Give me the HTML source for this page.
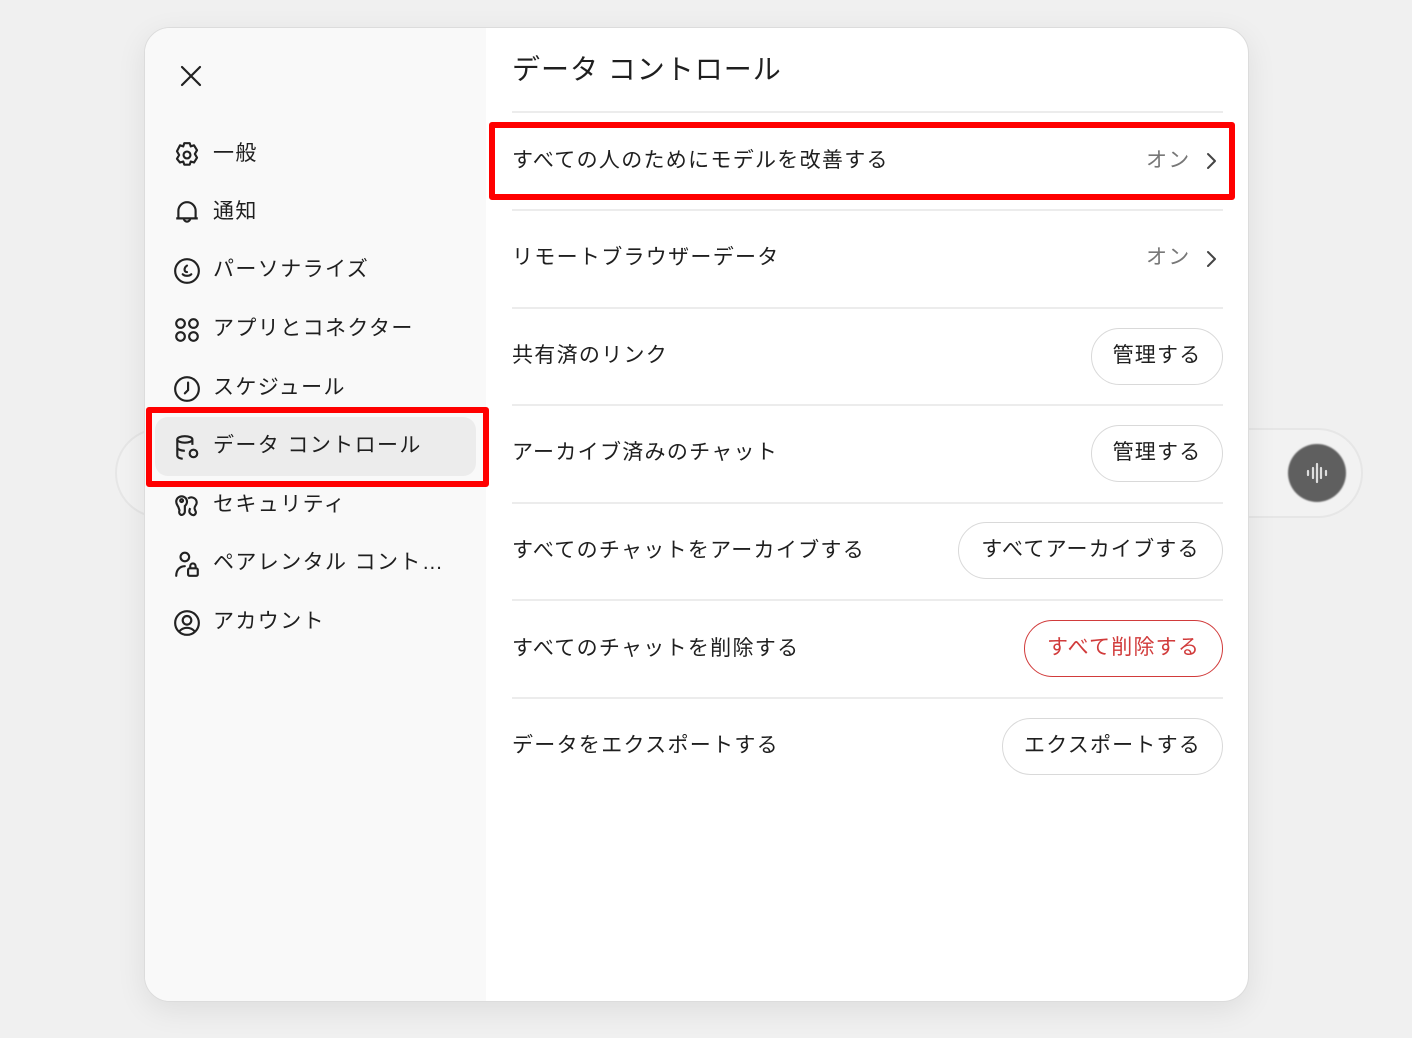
<!DOCTYPE html>
<html><head><meta charset="utf-8"><style>
*{margin:0;padding:0;box-sizing:border-box}
body{width:1412px;height:1038px;background:#f0f0f0;font-family:"Liberation Sans","Noto Sans CJK JP",sans-serif;color:#1f1f1f;position:relative;overflow:hidden}
.abs{position:absolute}
.pill{position:absolute;left:115px;top:428px;width:1248px;height:90px;border-radius:45px;border:2px solid #e6e6e6;background:#f2f2f2}
.mic{position:absolute;left:1288px;top:444px;width:58px;height:58px;border-radius:50%;background:#5f5f5f;filter:blur(0.8px)}
.modal{position:absolute;left:144px;top:27px;width:1105px;height:975px;border-radius:26px;background:#fff;overflow:hidden;box-shadow:0 8px 30px rgba(0,0,0,.08);border:1px solid #dcdcdc}
.side{position:absolute;left:0;top:0;width:341px;height:100%;background:#f9f9f9}
.item{position:absolute;left:0;width:341px;height:40px;font-size:21px;line-height:40px;letter-spacing:1.4px}
.item svg{position:absolute;left:28px;top:7px}
.item span{position:absolute;left:68px;top:0;white-space:nowrap}
.sel{position:absolute;left:10px;top:389px;width:321px;height:59px;border-radius:13px;background:#ececec}
.title{position:absolute;left:367px;top:22px;font-size:28px;line-height:40px;letter-spacing:1px}
.hr{position:absolute;left:367px;width:711px;height:2px;background:#ececec}
.row{position:absolute;left:367px;font-size:21px;line-height:30px;white-space:nowrap;letter-spacing:1.3px}
.on{position:absolute;left:1001px;font-size:21px;color:#777;line-height:30px;letter-spacing:1.3px}
.btn{position:absolute;height:57px;border:1.5px solid #d9d9d9;border-radius:29px;font-size:21px;line-height:54px;text-align:center;white-space:nowrap;background:#fff;letter-spacing:1.2px}
.red{border-color:#d13b3b;color:#d13b3b}
.rb{position:absolute;border:6px solid #ff0000;border-radius:3px}
</style></head><body>
<div class="pill"></div>
<div class="mic"></div>
<svg class="abs" style="left:1303px;top:461px" width="28" height="24" viewBox="0 0 28 24"><path d="M5 10v4M10 7v10M14 3v18M18 7v10M23 10v4" stroke="#ddd" stroke-width="2.2" stroke-linecap="round"/></svg>
<div class="modal">
 <div class="side">
  <svg class="abs" style="left:35px;top:37px" width="22" height="22" viewBox="0 0 22 22"><path d="M2 2L20 20M20 2L2 20" stroke="#222" stroke-width="2.2" stroke-linecap="round"/></svg>
  <div class="sel"></div>
  <div class="item" style="top:106px"><svg width="28" height="28" viewBox="0 0 26 26" fill="none" stroke="#222" stroke-width="2"><path d="M10.5 2h5l1 3 3-1 2.8 4.5-2 3.5 2 3.5-2.8 4.5-3-1-1 3h-5l-1-3-3 1L3.7 16.5l2-3.5-2-3.5L6.5 4l3 1z" stroke-linejoin="round"/><circle cx="13" cy="13" r="3.2"/></svg><span>一般</span></div>
  <div class="item" style="top:164px"><svg width="28" height="28" viewBox="0 0 26 26" fill="none" stroke="#222" stroke-width="2"><path d="M5 18V11a8 8 0 0116 0v7zM3 18h20M10 18a3 3 0 006 0" stroke-linejoin="round"/></svg><span>通知</span></div>
  <div class="item" style="top:222px"><svg width="28" height="28" viewBox="0 0 26 26" fill="none" stroke="#222" stroke-width="2"><circle cx="13" cy="13" r="11"/><path d="M13 8c-3 2-3 6 0 6M9 16c2 2 6 2 8 0" stroke-linecap="round"/></svg><span>パーソナライズ</span></div>
  <div class="item" style="top:281px"><svg width="28" height="28" viewBox="0 0 26 26" fill="none" stroke="#222" stroke-width="2"><circle cx="7" cy="7" r="4"/><circle cx="19" cy="7" r="4"/><circle cx="7" cy="19" r="4"/><circle cx="19" cy="19" r="4"/></svg><span>アプリとコネクター</span></div>
  <div class="item" style="top:340px"><svg width="28" height="28" viewBox="0 0 26 26" fill="none" stroke="#222" stroke-width="2"><circle cx="13" cy="13" r="11"/><path d="M14 7v7l-3 3" stroke-linecap="round"/></svg><span>スケジュール</span></div>
  <div class="item" style="top:398px"><svg width="28" height="28" viewBox="0 0 26 26" fill="none" stroke="#222" stroke-width="2"><ellipse cx="11" cy="6" rx="7" ry="3"/><path d="M4 6v15c0 1.5 2 2.5 5 3M18 6v5M4 13.5c0 1.5 3 3 7 3"/><circle cx="19" cy="19" r="3.5"/></svg><span>データ コントロール</span></div>
  <div class="item" style="top:457px"><svg width="28" height="28" viewBox="0 0 26 26" fill="none" stroke="#222" stroke-width="2"><path d="M3 9a5 5 0 0110 0c0 2-1 3-2 4v5c0 2-2 4-4 3s-1-4-1-4l-1-3C4 12 3 11 3 9zM14 6a5 5 0 018 4c0 2-2 3-2 5s2 3 1 5-3 2-5 0c-1-1-1-3 0-5"/><circle cx="8" cy="8" r="1.3"/></svg><span>セキュリティ</span></div>
  <div class="item" style="top:515px"><svg width="28" height="28" viewBox="0 0 26 26" fill="none" stroke="#222" stroke-width="2"><circle cx="11" cy="6.5" r="4"/><path d="M3 24c0-5 3-9 8-9" stroke-linecap="round"/><rect x="14" y="17" width="9" height="7" rx="1.5"/><path d="M16 17v-2a2.5 2.5 0 015 0v2"/></svg><span>ペアレンタル コント…</span></div>
  <div class="item" style="top:574px"><svg width="28" height="28" viewBox="0 0 26 26" fill="none" stroke="#222" stroke-width="2"><circle cx="13" cy="13" r="11"/><circle cx="13" cy="10.5" r="4"/><path d="M6 20.5c4-4 10-4 14 0"/></svg><span>アカウント</span></div>
 </div>
 <div class="title">データ コントロール</div>
 <div class="hr" style="top:83px"></div>
 <div class="row" style="top:118px">すべての人のためにモデルを改善する</div>
 <div class="on" style="top:118px">オン</div>
 <svg class="abs" style="left:1060px;top:124px" width="12" height="18" viewBox="0 0 12 18"><path d="M3 2l7 7-7 7" fill="none" stroke="#444" stroke-width="2" stroke-linecap="round" stroke-linejoin="round"/></svg>
 <div class="hr" style="top:181px"></div>
 <div class="row" style="top:215px">リモートブラウザーデータ</div>
 <div class="on" style="top:215px">オン</div>
 <svg class="abs" style="left:1060px;top:222px" width="12" height="18" viewBox="0 0 12 18"><path d="M3 2l7 7-7 7" fill="none" stroke="#444" stroke-width="2" stroke-linecap="round" stroke-linejoin="round"/></svg>
 <div class="hr" style="top:279px"></div>
 <div class="row" style="top:313px">共有済のリンク</div>
 <div class="btn" style="left:946px;top:300px;width:132px">管理する</div>
 <div class="hr" style="top:376px"></div>
 <div class="row" style="top:410px">アーカイブ済みのチャット</div>
 <div class="btn" style="left:946px;top:397px;width:132px">管理する</div>
 <div class="hr" style="top:474px"></div>
 <div class="row" style="top:508px">すべてのチャットをアーカイブする</div>
 <div class="btn" style="left:813px;top:494px;width:265px">すべてアーカイブする</div>
 <div class="hr" style="top:571px"></div>
 <div class="row" style="top:606px">すべてのチャットを削除する</div>
 <div class="btn red" style="left:879px;top:592px;width:199px">すべて削除する</div>
 <div class="hr" style="top:669px"></div>
 <div class="row" style="top:703px">データをエクスポートする</div>
 <div class="btn" style="left:857px;top:690px;width:221px">エクスポートする</div>
</div>
<div class="rb" style="left:489px;top:122px;width:746px;height:78px"></div>
<div class="rb" style="left:146px;top:407px;width:343px;height:80px"></div>
</body></html>
